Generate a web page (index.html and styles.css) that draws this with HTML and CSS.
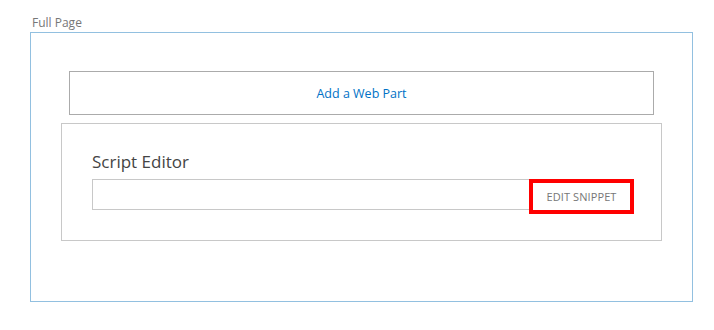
FILE: index.html
```html
<!DOCTYPE html>
<html>
<head>
<meta charset="utf-8">
<link rel="stylesheet" href="styles.css">
</head>
<body>
<div class="label">Full Page</div>
<div class="zone">
  <div class="add-part"><span class="add-link">Add a Web Part</span></div>
  <div class="webpart">
    <div class="wp-title">Script Editor</div>
    <div class="snippet-row">
      <div class="snippet-input"></div>
      <div class="snippet-btn">EDIT SNIPPET</div>
    </div>
  </div>
</div>
</body>
</html>
```
FILE: styles.css
```css
html, body {
  margin: 0;
  padding: 0;
  background: #ffffff;
  font-family: "Open Sans", "Noto Sans", sans-serif;
}
.label {
  margin-left: 32px;
  padding-top: 14px;
  height: 18px;
  font-size: 12px;
  line-height: 18px;
  color: #777777;
}
.zone {
  margin-left: 30px;
  width: 663px;
  height: 270px;
  box-sizing: border-box;
  border: 1px solid #92c0e0;
  padding-top: 38px;
}
.add-part {
  margin: 0 38px;
  height: 44px;
  box-sizing: border-box;
  border: 1px solid #ababab;
  display: flex;
  align-items: center;
  justify-content: center;
}
.add-link {
  color: #0072c6;
  font-size: 12.5px;
}
.webpart {
  margin: 8px 30px 0 30px;
  height: 118px;
  box-sizing: border-box;
  border: 1px solid #c8c8c8;
  padding: 25px 27px 0 30px;
}
.wp-title {
  font-size: 17px;
  line-height: 26px;
  height: 30px;
  color: #444444;
}
.snippet-row {
  display: flex;
  align-items: flex-start;
}
.snippet-input {
  flex: 1;
  height: 31px;
  box-sizing: border-box;
  border: 1px solid #c8c8c8;
  border-right: none;
}
.snippet-btn {
  width: 105px;
  height: 35px;
  box-sizing: border-box;
  border: 4px solid #ff0000;
  display: flex;
  align-items: center;
  justify-content: center;
  font-size: 11px;
  color: #777777;
  letter-spacing: 0.1px;
}
```
